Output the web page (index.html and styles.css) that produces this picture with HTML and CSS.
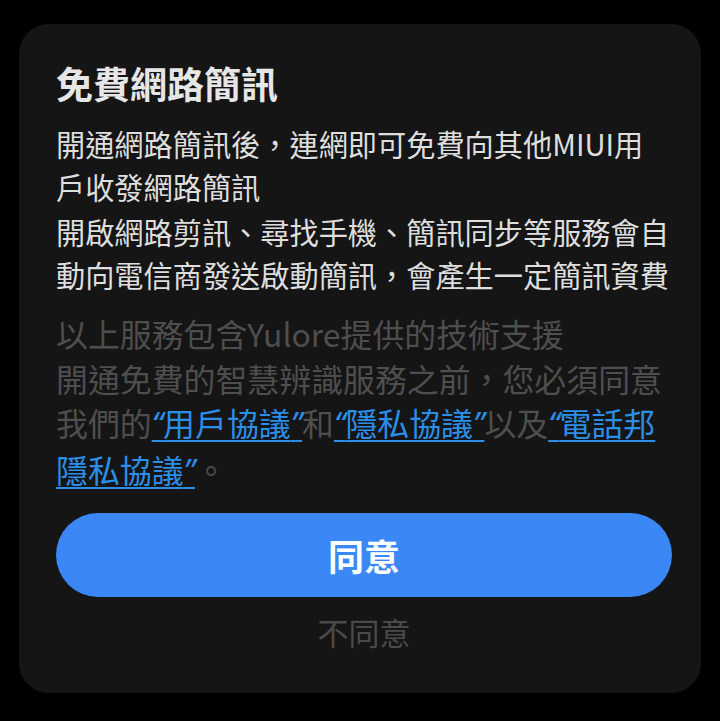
FILE: index.html
```html
<!DOCTYPE html>
<html lang="zh-Hant">
<head>
<meta charset="utf-8">
<link rel="stylesheet" href="styles.css">
</head>
<body>
<div class="card">
  <h1 class="title">免費網路簡訊</h1>
  <div class="body">
    <p class="para">開通網路簡訊後，連網即可免費向其他MIUI用<br>戶收發網路簡訊</p>
    <p class="para">開啟網路剪訊、尋找手機、簡訊同步等服務會自<br>動向電信商發送啟動簡訊，會產生一定簡訊資費</p>
  </div>
  <p class="notice">以上服務包含Yulore提供的技術支援<br>開通免費的智慧辨識服務之前，您必須同意<br>我們的<a class="link"><span class="q">“</span>用戶協議<span class="q">”</span></a>和<a class="link"><span class="q">“</span>隱私協議<span class="q">”</span></a>以及<a class="link"><span class="q">“</span>電話邦<br>隱私協議<span class="q">”</span></a>。</p>
  <button class="agree">同意</button>
  <div class="disagree">不同意</div>
</div>
</body>
</html>
```
FILE: styles.css
```css
html, body {
  margin: 0;
  padding: 0;
  background: #000;
}
body {
  width: 720px;
  height: 721px;
  padding-top: 24px;
  box-sizing: border-box;
  font-family: "Noto Sans CJK TC", "Noto Sans", sans-serif;
}
.card {
  margin-left: 19px;
  width: 682px;
  height: 669px;
  box-sizing: border-box;
  background: #151515;
  border-radius: 30px;
  padding: 34px 29px 0 37px;
  display: flex;
  flex-direction: column;
}
.title {
  margin: 0;
  font-size: 37px;
  line-height: 50px;
  font-weight: 700;
  color: #e6e6e6;
}
.body {
  margin-top: 14px;
  display: flex;
  flex-direction: column;
  gap: 2px;
}
.para {
  margin: 0;
  font-size: 29.2px;
  line-height: 43px;
  color: #dedede;
  white-space: nowrap;
}
.notice {
  margin: 15px 0 0;
  font-size: 31.9px;
  line-height: 44.5px;
  color: #4e4e4e;
  white-space: nowrap;
}
.link {
  color: #2b8fe8;
  text-decoration: underline;
  text-decoration-thickness: 2px;
  text-underline-offset: 4px;
}
.q {
  font-family: "Noto Sans", sans-serif;
  font-style: italic;
}
.agree {
  margin-top: 20px;
  height: 84px;
  width: 100%;
  border: none;
  border-radius: 42px;
  background: #3c87f6;
  color: #fff;
  font-family: inherit;
  font-size: 36px;
  font-weight: 700;
  padding: 0;
}
.disagree {
  margin-top: 15px;
  text-align: center;
  font-size: 31px;
  line-height: 40px;
  color: #4a4a4a;
}
```
